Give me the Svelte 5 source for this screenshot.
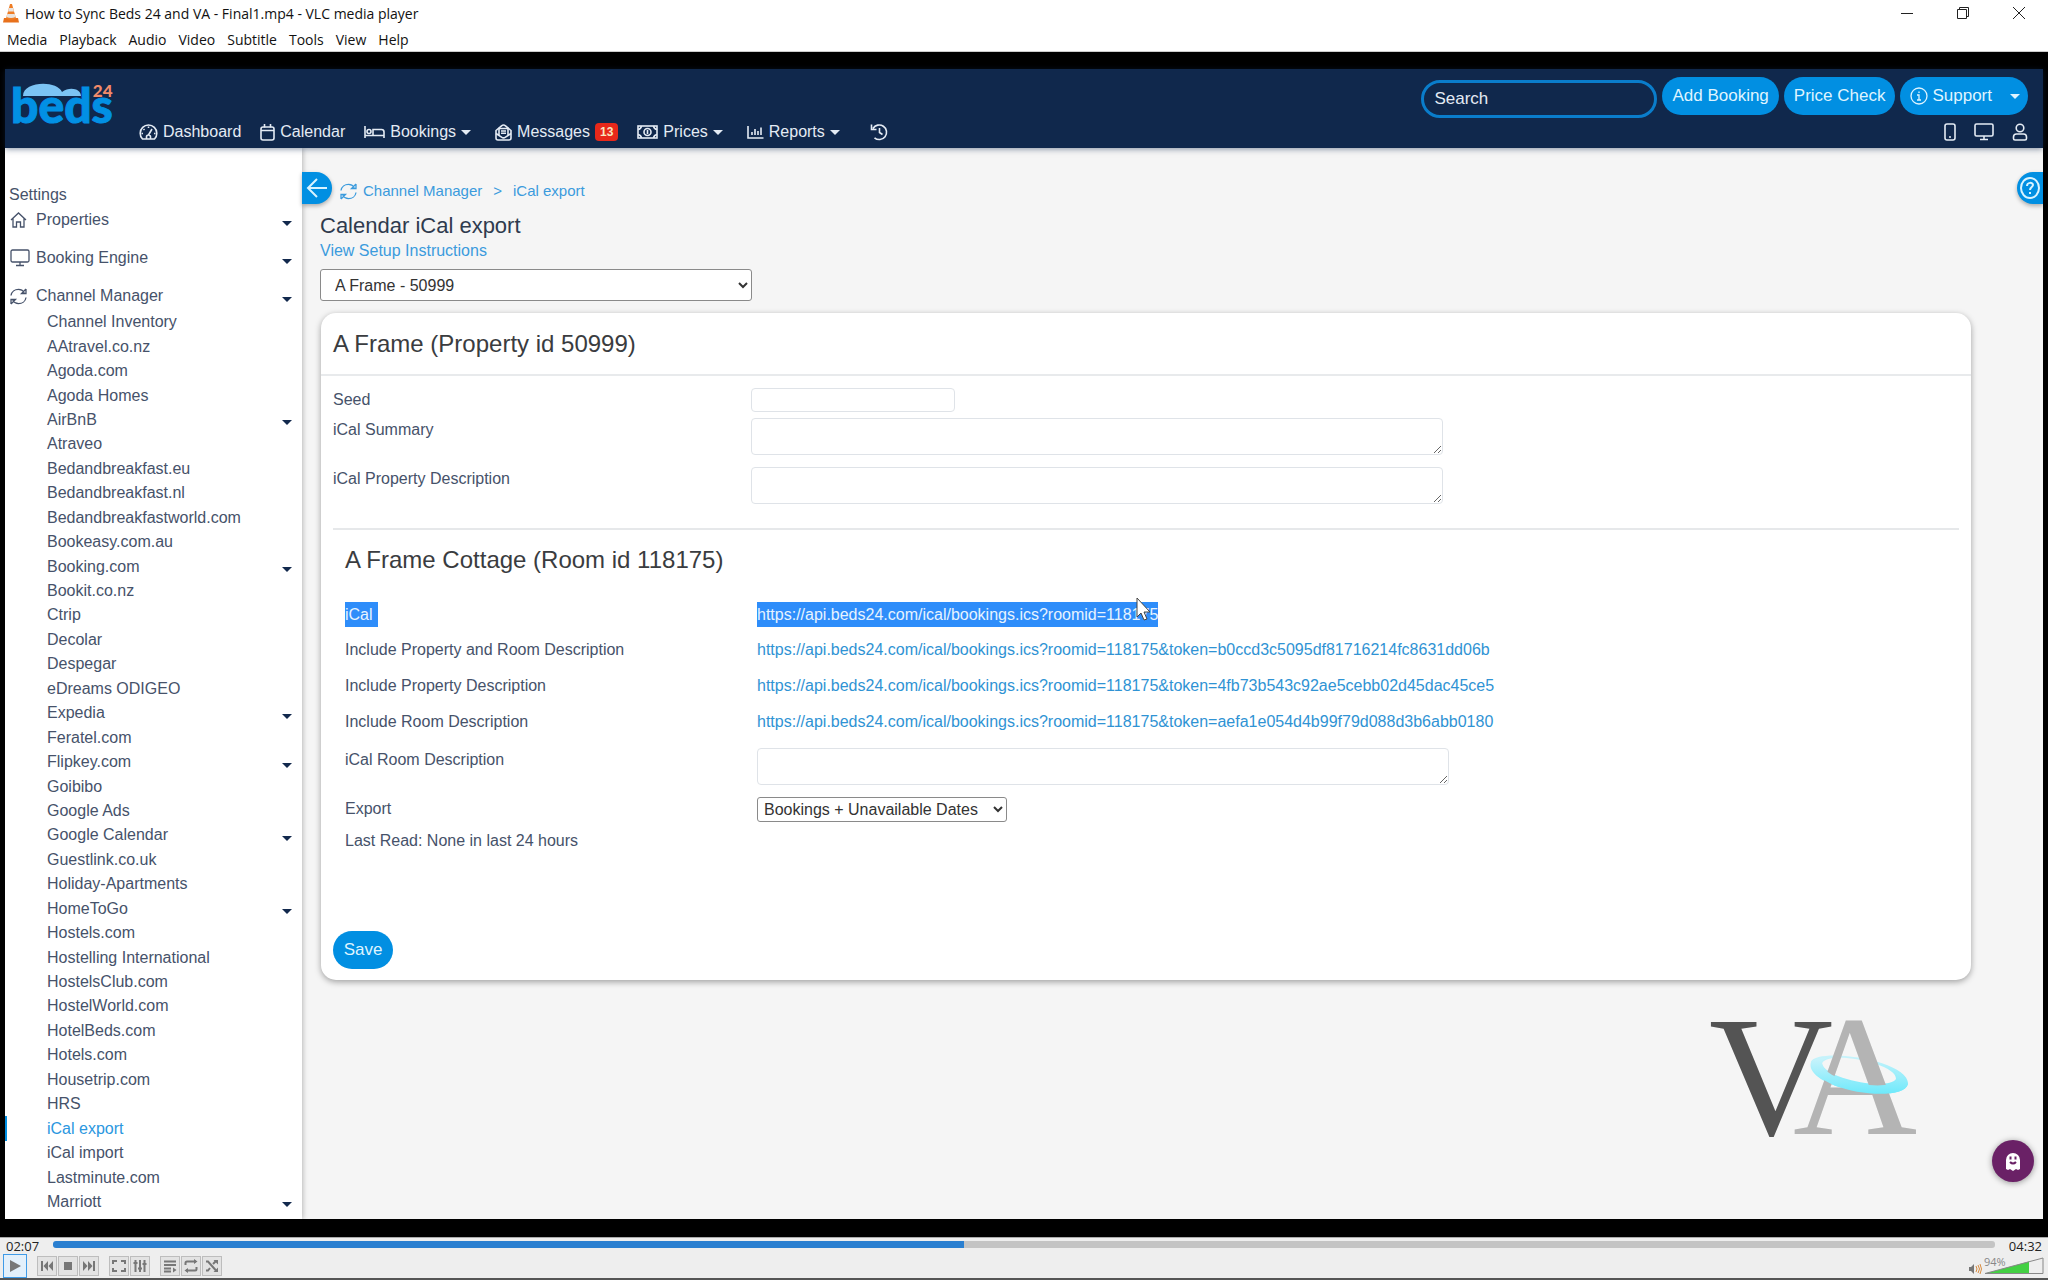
<script>
  let progress = 46.9;
  let volume = 94;
  let search = '';
  let property = 'A Frame - 50999';
  let exportType = 'Bookings + Unavailable Dates';

  const menus = ['Media', 'Playback', 'Audio', 'Video', 'Subtitle', 'Tools', 'View', 'Help'];

  const navItems = [
    { label: 'Dashboard', icon: 'dashboard' },
    { label: 'Calendar', icon: 'calendar' },
    { label: 'Bookings', icon: 'bed', caret: true },
    { label: 'Messages', icon: 'mail', badge: 13 },
    { label: 'Prices', icon: 'money', caret: true },
    { label: 'Reports', icon: 'chart', caret: true }
  ];

  const sections = [
    { label: 'Properties', icon: 'home' },
    { label: 'Booking Engine', icon: 'monitor' },
    { label: 'Channel Manager', icon: 'sync' }
  ];

  const channels = [
    'Channel Inventory', 'AAtravel.co.nz', 'Agoda.com', 'Agoda Homes', 'AirBnB', 'Atraveo',
    'Bedandbreakfast.eu', 'Bedandbreakfast.nl', 'Bedandbreakfastworld.com', 'Bookeasy.com.au',
    'Booking.com', 'Bookit.co.nz', 'Ctrip', 'Decolar', 'Despegar', 'eDreams ODIGEO', 'Expedia',
    'Feratel.com', 'Flipkey.com', 'Goibibo', 'Google Ads', 'Google Calendar', 'Guestlink.co.uk',
    'Holiday-Apartments', 'HomeToGo', 'Hostels.com', 'Hostelling International', 'HostelsClub.com',
    'HostelWorld.com', 'HotelBeds.com', 'Hotels.com', 'Housetrip.com', 'HRS', 'iCal export',
    'iCal import', 'Lastminute.com', 'Marriott'
  ];
  const expandable = ['AirBnB', 'Booking.com', 'Expedia', 'Flipkey.com', 'Google Calendar', 'HomeToGo', 'Marriott'];
  const active = 'iCal export';

  const baseUrl = 'https://api.beds24.com/ical/bookings.ics?roomid=118175';
  const feeds = [
    { label: 'Include Property and Room Description', token: 'b0ccd3c5095df81716214fc8631dd06b' },
    { label: 'Include Property Description', token: '4fb73b543c92ae5cebb02d45dac45ce5' },
    { label: 'Include Room Description', token: 'aefa1e054d4b99f79d088d3b6abb0180' }
  ];

  const controlGroups = [
    ['previous', 'stop', 'next'],
    ['fullscreen', 'settings'],
    ['playlist', 'loop', 'shuffle']
  ];
</script>

{#snippet icon(name)}
  {#if name === 'dashboard'}
    <svg class="icon" width="19" height="16" viewBox="0 0 19 16">
      <path d="M3.5 15A8.3 8.3 0 1 1 15.5 15Z" />
      <path d="M9.5 11 13 5M7.5 15v-2a2 2 0 0 1 4 0v2M9.5 2.5V4M4.5 5l1 1M2.5 9.5H4M15 9.5h1.500" />
    </svg>
  {:else if name === 'calendar'}
    <svg class="icon" width="15" height="17" viewBox="0 0 15 17">
      <rect x="1" y="3" width="13" height="13" rx="2" />
      <path d="M1 6.5h13M4.5 0v3.5M10.5 0v3.5" />
    </svg>
  {:else if name === 'bed'}
    <svg class="icon" width="21" height="14" viewBox="0 0 21 14">
      <path d="M1 1v12M1 10.5h19M20 13V7a2.5 2.5 0 0 0-2.5-2.5H9v6" />
      <circle cx="5" cy="6.5" r="2" />
    </svg>
  {:else if name === 'mail'}
    <svg class="icon" width="17" height="17" viewBox="0 0 17 17">
      <path d="M1 6.5 6.5 1.800a3.2 3.2 0 0 1 4 0L16 6.5V14a2 2 0 0 1-2 2H3a2 2 0 0 1-2-2Z" />
      <path d="m1 9.5 5.5 3.700a3.5 3.5 0 0 0 4 0L16 9.5M4 11V4.5h9V11M6 7h5M6 9.3h5" />
    </svg>
  {:else if name === 'money'}
    <svg class="icon" width="21" height="14" viewBox="0 0 21 14">
      <rect x="1" y="1" width="19" height="12" />
      <path d="M1 4.5Q4 4 4.5 1M20 4.5Q17 4 16.5 1M1 9.5Q4 10 4.5 13M20 9.5q-3 .5-3.5 3.5" />
      <circle cx="10.5" cy="7" r="3.5" />
      <path d="M10.5 5v4" />
    </svg>
  {:else if name === 'chart'}
    <svg class="icon" width="17" height="14" viewBox="0 0 17 14">
      <path d="M1 1v12h15.500M5 10V7M8 10V4M11 10V6M14 10V2.5" />
    </svg>
  {:else if name === 'history'}
    <svg class="icon" width="18" height="18" viewBox="0 0 18 18">
      <path d="M3 5.5A7.3 7.3 0 1 1 4.5 14.8M1.5 1.5v5h5M9.5 5v4.500l3 2" />
    </svg>
  {:else if name === 'phone'}
    <svg class="icon" width="12" height="18" viewBox="0 0 12 18">
      <rect x="1" y="1" width="10" height="16" rx="2" />
      <path d="M5 14h2" />
    </svg>
  {:else if name === 'monitor'}
    <svg class="icon" width="20" height="18" viewBox="0 0 20 18">
      <rect x="1" y="1" width="18" height="12" rx="1.5" />
      <path d="M10 13v3.500M6 16.5h8" />
    </svg>
  {:else if name === 'user'}
    <svg class="icon" width="16" height="18" viewBox="0 0 16 18">
      <circle cx="8" cy="5" r="3.8" />
      <path d="M4.5 11h7a3 3 0 0 1 3 3v1.500A1.5 1.5 0 0 1 13 17H3a1.5 1.5 0 0 1-1.5-1.500V14a3 3 0 0 1 3-3Z" />
    </svg>
  {:else if name === 'home'}
    <svg class="icon" width="17" height="17" viewBox="0 0 17 17">
      <path d="M1 8 8.5 1 16 8M3 6.5V15h3.500v-5h4v5H14V6.5" />
    </svg>
  {:else if name === 'sync'}
    <svg class="icon" width="17" height="17" viewBox="0 0 17 17">
      <path d="M1 7.5C1.5 3.5 5 1.3 8.5 1.3c2.500 0 4.500 1.200 5.800 3.200M16 1v4.500h-4.500L16 1M16 9.5c-.5 4-4 6.200-7.500 6.200-2.500 0-4.500-1.200-5.800-3.200M1 16v-4.500h4.500L1 16" />
    </svg>
  {:else if name === 'info'}
    <svg class="icon" width="18" height="18" viewBox="0 0 18 18">
      <circle cx="9" cy="9" r="8" />
      <path d="M7 8h2v5M7 13h4M9 4.5V6" />
    </svg>
  {/if}
{/snippet}

{#snippet controlIcon(name)}
  <svg width="14" height="14" viewBox="0 0 14 14">
    {#if name === 'previous'}
      <path class="solid" d="M1 2h2v10H1zM8 2v10L3.5 7zM13 2v10L8.5 7z" />
    {:else if name === 'stop'}
      <path class="solid" d="M3 3h8v8H3z" />
    {:else if name === 'next'}
      <path class="solid" d="M11 2h2v10h-2zM6 2v10l4.500-5zM1 2v10l4.500-5z" />
    {:else if name === 'fullscreen'}
      <path class="line" d="M1 5V2h4M9 2h4v3M13 9v3H9M5 12H1V9" />
    {:else if name === 'settings'}
      <path class="line" d="M2.5 1v12M7 1v12M11.5 1v12M.5 4h4M5 9.5h4M9.5 5h4" />
    {:else if name === 'playlist'}
      <path class="line" d="M1 2.5h12M1 6h12M1 9.5h7M1 12.5h7" />
      <path class="solid" d="M10 8.5 13.5 11 10 13.5z" />
    {:else if name === 'loop'}
      <path class="line" d="M1.5 6V4q0-1.500 1.500-1.500h9M12.5 8v2q0 1.500-1.500 1.500H2" />
      <path class="solid" d="M10 0 13.5 2.5 10 5zM4 9 .5 11.5 4 14z" />
    {:else if name === 'shuffle'}
      <path class="line" d="M1 2.5h2l8 9M1 11.5h2l2-2.500M8 5l3-3" />
      <path class="solid" d="M8.5 1H13v4.500zM13 8.5V13H8.5z" />
    {/if}
  </svg>
{/snippet}

<div class="player">
  <header class="titlebar">
    <svg width="16" height="20" viewBox="0 0 16 20">
      <path d="M1 15h14l1 4.500H0z" fill="#e8711c" />
      <path d="M7 1h2l4 14.500q-5 2.500-10 0z" fill="#ef7d25" />
      <path d="M6 5h4l1 3.500H5zM4.3 11h7.400l.8 3q-4.500 2-9 0z" fill="#e9e4df" />
    </svg>
    <h1>How to Sync Beds 24 and VA - Final1.mp4 - VLC media player</h1>
    <div class="window-buttons">
      <button aria-label="Minimize"><svg width="14" height="14" viewBox="0 0 14 14"><path d="M1 7.5h12" /></svg></button>
      <button aria-label="Restore"><svg width="14" height="14" viewBox="0 0 14 14"><path d="M1.5 3.5h9v9h-9zM3.5 3V1.5h9v9H11" /></svg></button>
      <button aria-label="Close"><svg width="14" height="14" viewBox="0 0 14 14"><path d="m1 1 12 12M13 1 1 13" /></svg></button>
    </div>
  </header>
  <nav class="menubar" aria-label="Player menu">
    {#each menus as menu}
      <button>{menu}</button>
    {/each}
  </nav>

  <main class="video">
    <div class="site">
      <header class="topbar">
        <svg class="logo" width="104" height="46" viewBox="0 0 104 46">
          <text class="logo-beds" x="-1" y="40">beds<tspan class="logo-24" dx="-20" dy="-26">24</tspan></text>
          <path d="M11 13c0-15 34-16 39-4 8-6 19-3 19 4z" fill="#7cc4f4" />
        </svg>
        <div class="topbar-rows">
          <div class="actions">
            <input class="search" type="text" placeholder="Search" aria-label="Search" bind:value={search} />
            <button class="pill">Add Booking</button>
            <button class="pill">Price Check</button>
            <button class="pill support">{@render icon('info')} Support <span class="caret"></span></button>
          </div>
          <nav class="mainnav" aria-label="Main">
            {#each navItems as item}
              <a href="#{item.icon}" class:with-caret={item.caret}>
                {@render icon(item.icon)}
                {item.label}
                {#if item.badge}<span class="badge">{item.badge}</span>{/if}
                {#if item.caret}<span class="caret"></span>{/if}
              </a>
            {/each}
            <a href="#history" class="history" aria-label="History">{@render icon('history')}</a>
            <div class="tools">
              <a href="#mobile" aria-label="Mobile view">{@render icon('phone')}</a>
              <a href="#desktop" aria-label="Desktop view">{@render icon('monitor')}</a>
              <a href="#account" aria-label="Account">{@render icon('user')}</a>
            </div>
          </nav>
        </div>
      </header>

      <div class="columns">
        <aside class="sidebar">
          <div class="settings">Settings</div>
          <div class="sections">
            {#each sections as section}
              <a href="#{section.icon}" class="section">
                <span class="section-icon">{@render icon(section.icon)}</span>
                {section.label}
                <span class="caret"></span>
              </a>
            {/each}
          </div>
          <ul>
            {#each channels as channel}
              <li class:active={channel === active}>
                <a href="#channel">{channel}</a>
                {#if expandable.includes(channel)}<span class="caret"></span>{/if}
              </li>
            {/each}
          </ul>
        </aside>

        <section class="content">
          <button class="back" aria-label="Collapse menu">
            <svg width="22" height="22" viewBox="0 0 22 22"><path d="M21 11H2M11 2 2 11l9 9" /></svg>
          </button>
          <button class="help" aria-label="Help">
            <svg width="20" height="22" viewBox="0 0 20 22">
              <ellipse cx="10" cy="11" rx="9" ry="10" />
              <path d="M7 9c0-4 6-4 6-1 0 2-3 2-3 5M10 15v2" />
            </svg>
          </button>

          <div class="breadcrumb">
            {@render icon('sync')}
            <a href="#manager">Channel Manager</a>
            <span>&gt;</span>
            <a href="#ical">iCal export</a>
          </div>
          <h2>Calendar iCal export</h2>
          <a class="instructions" href="#setup">View Setup Instructions</a>
          <select class="property" aria-label="Property" bind:value={property}>
            <option>A Frame - 50999</option>
          </select>

          <form class="card" on:submit|preventDefault>
            <h3>A Frame (Property id 50999)</h3>
            <div class="fields">
              <label for="seed">Seed</label>
              <input id="seed" type="text" />
              <label for="summary">iCal Summary</label>
              <textarea id="summary"></textarea>
              <label for="description">iCal Property Description</label>
              <textarea id="description"></textarea>
            </div>
            <hr />
            <div class="room">
              <h4>A Frame Cottage (Room id 118175)</h4>
              <div class="feeds">
                <span><mark class="wide">iCal</mark></span>
                <a class="first" href={baseUrl}>
                  <mark>{baseUrl}</mark>
                  <svg class="cursor" width="16" height="24" viewBox="0 0 16 24">
                    <path d="M1 1v19l4-4 3 7 3-1-3-7h6z" />
                  </svg>
                </a>
                {#each feeds as feed}
                  <span>{feed.label}</span>
                  <a href="{baseUrl}&token={feed.token}">{baseUrl}&amp;token={feed.token}</a>
                {/each}
              </div>
              <div class="room-fields">
                <label for="room-description">iCal Room Description</label>
                <textarea id="room-description"></textarea>
                <label for="export">Export</label>
                <select id="export" bind:value={exportType}>
                  <option>Bookings + Unavailable Dates</option>
                </select>
              </div>
              <p>Last Read: None in last 24 hours</p>
            </div>
            <button class="pill save">Save</button>
          </form>

          <svg class="watermark" width="208" height="118" viewBox="0 0 208 118">
            <defs>
              <linearGradient id="ring" x1="0" y1="0" x2="0" y2="1">
                <stop offset="0" stop-color="#c9f3fb" />
                <stop offset="1" stop-color="#6ee9fb" />
              </linearGradient>
            </defs>
            <path class="ring" d="M102 43c6-15 98-2 97 22-6 22-105 4-97-22zm11 1c2 16 66 28 74 16 1-16-67-29-74-16z" />
            <text x="0" y="115">V<tspan class="letter-a" x="84">A</tspan></text>
            <path class="ring" d="M102 43c0 30 92 42 97 22-1-4-3-8-12-12q2 4 0 8c-5 12-70 3-74-16 0-3 2-5 5-6q-14 0-16 4z" />
          </svg>
          <button class="chat" aria-label="Chat">
            <svg width="16" height="19" viewBox="0 0 16 19">
              <path d="M1 17V8a7 7 0 0 1 14 0v9l-2 1-2-1-3 2-3-2-2 1z" fill="#fff" />
              <path d="M5.5 4.5v3M10.5 4.5v3M5 10q3 3 6 0" fill="none" stroke="#6a2166" stroke-width="2" />
            </svg>
          </button>
        </section>
      </div>
    </div>
  </main>

  <footer class="controls">
    <div class="seek">
      <span>02:07</span>
      <input type="range" min="0" max="100" step="0.1" aria-label="Position" bind:value={progress} style="--progress: {progress}%" />
      <span>04:32</span>
    </div>
    <div class="buttons">
      <button class="play" aria-label="Play">
        <svg width="14" height="14" viewBox="0 0 14 14"><path class="solid" d="M2 1v12l11-6z" /></svg>
      </button>
      {#each controlGroups as group}
        <div class="group">
          {#each group as name}
            <button aria-label={name}>{@render controlIcon(name)}</button>
          {/each}
        </div>
      {/each}
      <div class="volume">
        <svg width="14" height="12" viewBox="0 0 14 12">
          <path d="M1 4h2l3-3v10L3 8H1z" fill="#777" />
          <path d="M8 3q2 3 0 6M10 2q3 4 0 8M12 1q3 5 0 10" fill="none" stroke="#d98c3f" />
        </svg>
        <div class="level">
          <svg width="60" height="18" viewBox="0 0 60 18">
            <path d="M1 16.5 45 4.5v12z" fill="#43d043" />
            <path d="M1 16.5 59 1v15.500z" fill="none" stroke="#888" />
          </svg>
          <span>{volume}%</span>
          <input type="range" min="0" max="125" aria-label="Volume" bind:value={volume} />
        </div>
      </div>
    </div>
  </footer>
</div>

<style>
  :global(body) {
    margin: 0;
  }

  .player {
    min-height: 100vh;
    display: flex;
    flex-direction: column;
    background: #fff;
    font-family: 'Liberation Sans', Arial, sans-serif;
    font-size: 16px;
    color: #46526a;
  }

  .player * {
    box-sizing: border-box;
  }

  button {
    padding: 0;
    border: 0;
    background: none;
    font: inherit;
    color: inherit;
  }

  a {
    color: inherit;
    text-decoration: none;
  }

  svg {
    flex: none;
    display: block;
  }

  .icon {
    fill: none;
    stroke: currentColor;
    stroke-width: 1.3;
  }

  .caret {
    flex: none;
    width: 0;
    height: 0;
    border: 5px solid transparent;
    border-top-color: currentColor;
    border-bottom-width: 0;
  }

  /* Window chrome */
  .titlebar {
    height: 28px;
    display: flex;
    align-items: center;
    gap: 6px;
    padding: 0 1px 2px 3px;
    color: #111;
  }

  .titlebar h1 {
    margin: 0;
    font: 14px 'Open Sans', 'Noto Sans', sans-serif;
  }

  .window-buttons {
    margin-left: auto;
    display: flex;
  }

  .window-buttons button {
    width: 56px;
    height: 26px;
    display: grid;
    place-items: center;
  }

  .window-buttons path {
    fill: none;
    stroke: #222;
  }

  .menubar {
    height: 24px;
    display: flex;
    gap: 12px;
    padding: 0 7px;
    border-bottom: 1px solid #ccc;
    font: 14px 'Open Sans', 'Noto Sans', sans-serif;
    color: #111;
  }

  .video {
    flex: 1;
    display: flex;
    padding: 17px 5px 18px;
    background: #000;
  }

  .site {
    flex: 1;
    display: flex;
    flex-direction: column;
    background: #f5f5f5;
  }

  /* Top bar */
  .topbar {
    position: relative;
    z-index: 1;
    height: 79px;
    display: flex;
    padding: 8px 15px 0 7px;
    background: #10284c;
    box-shadow: 0 1px 6px rgba(16, 40, 76, 0.5);
    color: #e4ebf4;
  }

  .logo {
    margin-top: 6px;
    overflow: visible;
  }

  .logo-beds {
    font: 900 48px Lato, sans-serif;
    fill: #0290e4;
    stroke: #0290e4;
  }

  .logo-24 {
    font-size: 17px;
    fill: #f08a6a;
    stroke: none;
  }

  .topbar-rows {
    flex: 1;
    padding-left: 23px;
  }

  .actions {
    display: flex;
    justify-content: flex-end;
    gap: 5px;
  }

  .search {
    width: 236px;
    height: 38px;
    margin-top: 3px;
    padding: 0 10px;
    border: 3px solid #0a7dcb;
    border-radius: 19px;
    background: transparent;
    font: 17px 'Liberation Sans', Arial, sans-serif;
    color: #fff;
  }

  .search::placeholder {
    color: #e4ebf4;
    opacity: 1;
  }

  .pill {
    height: 38px;
    padding: 0 10px;
    border-radius: 19px;
    background: #018fe2;
    font-size: 17px;
    color: #dff4ff;
  }

  .support {
    display: flex;
    align-items: center;
    gap: 4px;
    padding-right: 8px;
  }

  .support .caret {
    margin-left: 14px;
  }

  .mainnav {
    display: flex;
    align-items: center;
    gap: 19px;
    height: 28px;
  }

  .mainnav a {
    display: flex;
    align-items: center;
    gap: 5px;
  }

  .mainnav .icon {
    stroke-width: 1.6;
  }

  .mainnav .with-caret {
    margin-right: 5px;
  }

  .mainnav .history {
    margin-left: 6px;
  }

  .badge {
    padding: 0 5px;
    border-radius: 4px;
    background: #e8281a;
    font-size: 12px;
    font-weight: bold;
    line-height: 18px;
    color: #f8e6c0;
  }

  .tools {
    margin-left: auto;
    display: flex;
    gap: 18px;
  }

  .columns {
    flex: 1;
    display: flex;
  }

  /* Sidebar */
  .sidebar {
    width: 297px;
    display: flex;
    flex-direction: column;
    padding: 36px 0 5px;
    background: #fff;
    box-shadow: 1px 0 5px rgba(0, 0, 0, 0.25);
  }

  .settings {
    padding-left: 4px;
    line-height: 22px;
  }

  .sections {
    display: flex;
    flex-direction: column;
    gap: 10px;
  }

  .section {
    height: 28px;
    display: flex;
    align-items: center;
    padding: 0 10px 0 5px;
  }

  .section-icon {
    width: 26px;
  }

  .sidebar .caret {
    margin: 6px 0 0 auto;
    color: #12294d;
  }

  .sidebar ul {
    flex: 1;
    display: flex;
    flex-direction: column;
    margin: 0;
    padding: 0;
    list-style: none;
  }

  .sidebar li {
    flex: 1;
    display: flex;
    align-items: center;
    padding: 0 10px 0 42px;
    line-height: 24px;
  }

  .sidebar li.active {
    padding-left: 40px;
    border-left: 2px solid #018fe2;
    color: #2b97e0;
  }

  /* Page content */
  .content {
    position: relative;
    flex: 1;
    padding: 32px 72px 0 18px;
  }

  .back,
  .help {
    position: absolute;
    top: 24px;
    height: 32px;
    display: grid;
    place-items: center;
    background: #018fe2;
    box-shadow: 0 2px 4px rgba(0, 0, 0, 0.3);
  }

  .back {
    left: 0;
    width: 30px;
    border-radius: 0 16px 16px 0;
  }

  .help {
    right: 0;
    width: 26px;
    border-radius: 16px 0 0 16px;
  }

  .back path,
  .help path,
  .help ellipse {
    fill: none;
    stroke: #d8f3ff;
    stroke-width: 2;
  }

  .breadcrumb {
    display: flex;
    align-items: center;
    padding-left: 20px;
    font-size: 15px;
    line-height: 22px;
    color: #3b9bdd;
  }

  .breadcrumb span {
    margin: 0 11px;
  }

  .breadcrumb .icon {
    margin-right: 6px;
  }

  h2 {
    margin: 12px 0 0;
    font-size: 22px;
    font-weight: normal;
    line-height: 24px;
    color: #2f3b4e;
  }

  .instructions {
    display: block;
    line-height: 26px;
    color: #3b9bdd;
  }

  select {
    display: block;
    border: 1px solid #8a8a8a;
    border-radius: 3px;
    background-color: #fff;
    font: 16px 'Liberation Sans', Arial, sans-serif;
    color: #333;
  }

  .property {
    width: 432px;
    max-width: 100%;
    height: 32px;
    margin: 5px 0 12px;
    padding: 0 2px 0 10px;
  }

  .card {
    margin-left: 1px;
    padding-bottom: 11px;
    border-radius: 15px;
    background: #fff;
    box-shadow: 0 2px 6px rgba(0, 0, 0, 0.35);
  }

  h3,
  h4 {
    margin: 0;
    font-size: 24px;
    font-weight: normal;
    color: #3a3c40;
  }

  h3 {
    padding-left: 12px;
    border-bottom: 2px solid #e8eaec;
    line-height: 61px;
  }

  .fields {
    display: grid;
    grid-template-columns: 418px 1fr;
    row-gap: 6px;
    padding: 12px 12px 0;
  }

  label {
    line-height: 24px;
  }

  .fields input,
  textarea {
    border: 1px solid #dfe3e8;
    border-radius: 4px;
    background: #fff;
  }

  .fields input {
    width: 204px;
    height: 24px;
  }

  textarea {
    display: block;
    width: 692px;
    max-width: 100%;
    height: 37px;
    margin-bottom: 6px;
  }

  hr {
    height: 2px;
    margin: 18px 12px 0;
    border: 0;
    background: #e6e8ea;
  }

  .room {
    padding: 16px 24px 0;
  }

  h4 {
    line-height: 28px;
  }

  .feeds,
  .room-fields {
    display: grid;
    grid-template-columns: 412px 1fr;
  }

  .feeds {
    margin-top: 22px;
    grid-auto-rows: 36px;
    align-items: center;
  }

  .feeds a {
    color: #2f93d4;
  }

  mark {
    display: inline-block;
    background: #2e8dfa;
    line-height: 25px;
    color: #e6f3ff;
  }

  mark.wide {
    padding-right: 5px;
  }

  .first {
    position: relative;
    justify-self: start;
  }

  .cursor {
    position: absolute;
    top: -5px;
    right: 6px;
  }

  .cursor path {
    fill: #fff;
    stroke: #444;
  }

  .room-fields {
    row-gap: 6px;
    margin-top: 8px;
  }

  .room-fields select {
    width: 250px;
    height: 25px;
    padding: 0 2px;
  }

  .room p {
    margin: 7px 0 0;
    line-height: 24px;
  }

  .save {
    display: block;
    min-width: 60px;
    margin: 78px 0 0 12px;
  }

  .watermark {
    position: absolute;
    right: 126px;
    bottom: 82px;
    overflow: visible;
  }

  .watermark text {
    font: 172px 'Liberation Serif', serif;
    fill: #545454;
  }

  .watermark .letter-a {
    fill: #b4b4b4;
  }

  .ring {
    fill: url(#ring);
  }

  .chat {
    position: absolute;
    right: 9px;
    bottom: 37px;
    width: 42px;
    height: 42px;
    display: grid;
    place-items: center;
    border-radius: 50%;
    background: #6a2166;
    box-shadow: 0 1px 6px rgba(0, 0, 0, 0.4);
  }

  /* Player controls */
  .controls {
    height: 43px;
    border-top: 1px solid #aaa;
    border-bottom: 2px solid #555;
    background: #eee;
    color: #222;
  }

  .seek {
    height: 15px;
    display: flex;
    align-items: center;
    gap: 14px;
    padding: 0 6px;
    font: 13px 'Open Sans', 'Noto Sans', sans-serif;
  }

  .seek input {
    flex: 1;
    min-width: 0;
    height: 7px;
    margin: 0 0 2px;
    appearance: none;
    border-radius: 3px;
    background: linear-gradient(to right, #2a7fd0 var(--progress), #c4c4c4 var(--progress));
  }

  .seek input::-webkit-slider-thumb {
    appearance: none;
    width: 0;
    height: 0;
  }

  .buttons {
    height: 25px;
    display: flex;
    align-items: center;
    gap: 10px;
    padding: 0 4px 0 3px;
  }

  .buttons button {
    width: 20px;
    height: 20px;
    display: grid;
    place-items: center;
    border: 1px solid #bdbdbd;
    background: #e3e3e3;
  }

  .buttons .play {
    width: 24px;
    height: 24px;
    border-color: #3f9be8;
    background: #e3f0fb;
  }

  .solid {
    fill: #777;
  }

  .line {
    fill: none;
    stroke: #777;
    stroke-width: 2;
  }

  .group {
    display: flex;
    gap: 1px;
  }

  .volume {
    margin-left: auto;
    display: flex;
    align-items: flex-end;
    gap: 2px;
  }

  .level {
    position: relative;
  }

  .level span {
    position: absolute;
    left: 0;
    top: -3px;
    font: 11px 'Open Sans', 'Noto Sans', sans-serif;
    color: #888;
  }

  .level input {
    position: absolute;
    inset: 0;
    width: 100%;
    margin: 0;
    opacity: 0;
  }
</style>
